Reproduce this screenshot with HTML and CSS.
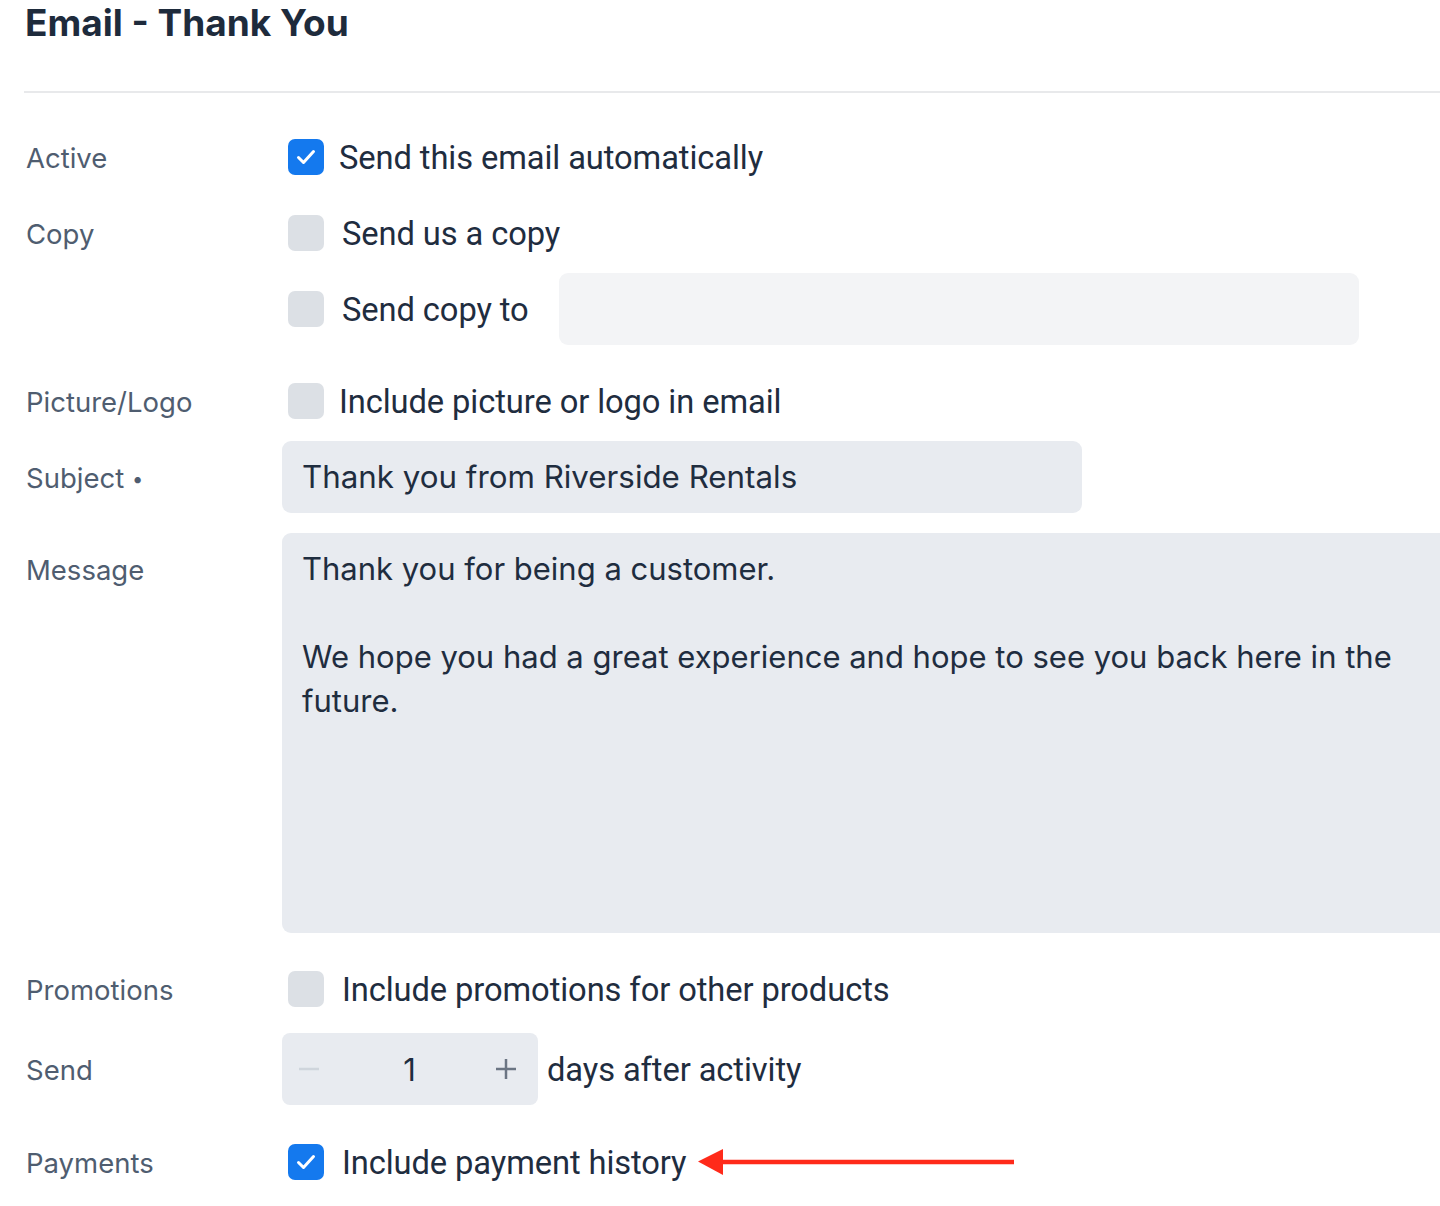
FILE: index.html
```html
<!DOCTYPE html>
<html lang="en">
<head>
<meta charset="utf-8">
<title>Email - Thank You</title>
<link rel="stylesheet" href="styles.css">
</head>
<body>
<div class="page">
  <h1 class="title">Email - Thank You</h1>
  <hr class="divider">
  <div class="form">
    <div class="row row-active">
      <div class="label">Active</div>
      <div class="control">
        <span class="check checked"><svg viewBox="0 0 36 36"><path d="M10.5 18.5l5 5 10-11" fill="none" stroke="#fff" stroke-width="3" stroke-linecap="round" stroke-linejoin="round"/></svg></span>
        <span class="opt">Send this email automatically</span>
      </div>
    </div>
    <div class="row row-copy">
      <div class="label">Copy</div>
      <div class="control">
        <span class="check"></span>
        <span class="opt opt-wide">Send us a copy</span>
      </div>
    </div>
    <div class="row row-copyto">
      <div class="label"></div>
      <div class="control">
        <span class="check"></span>
        <span class="opt opt-wide">Send copy to</span>
        <input class="field field-light" type="text" value="">
      </div>
    </div>
    <div class="row row-picture">
      <div class="label">Picture/Logo</div>
      <div class="control">
        <span class="check"></span>
        <span class="opt">Include picture or logo in email</span>
      </div>
    </div>
    <div class="row row-subject">
      <div class="label">Subject <span class="req">•</span></div>
      <div class="control">
        <input class="field" type="text" value="Thank you from Riverside Rentals">
      </div>
    </div>
    <div class="row row-message">
      <div class="label label-top">Message</div>
      <div class="control">
        <textarea class="area">Thank you for being a customer.

We hope you had a great experience and hope to see you back here in the future.</textarea>
      </div>
    </div>
    <div class="row row-promo">
      <div class="label">Promotions</div>
      <div class="control">
        <span class="check"></span>
        <span class="opt opt-wide">Include promotions for other products</span>
      </div>
    </div>
    <div class="row row-send">
      <div class="label">Send</div>
      <div class="control">
        <div class="stepper">
          <span class="step minus"><svg viewBox="0 0 24 24"><path d="M2 12h20" stroke="#cfd5dc" stroke-width="2.5"/></svg></span>
          <span class="step-value">1</span>
          <span class="step plus"><svg viewBox="0 0 24 24"><path d="M2 12h20M12 2v20" stroke="#6b7583" stroke-width="2.5"/></svg></span>
        </div>
        <span class="opt opt-after">days after activity</span>
      </div>
    </div>
    <div class="row row-payments">
      <div class="label">Payments</div>
      <div class="control">
        <span class="check checked"><svg viewBox="0 0 36 36"><path d="M10.5 18.5l5 5 10-11" fill="none" stroke="#fff" stroke-width="3" stroke-linecap="round" stroke-linejoin="round"/></svg></span>
        <span class="opt opt-wide">Include payment history</span>
        <svg class="arrow" viewBox="0 0 316 28"><path d="M22 14h294" stroke="#ff2a1a" stroke-width="4.5"/><path d="M0 13.5L25 1v26z" fill="#ff2a1a"/></svg>
      </div>
    </div>
  </div>
</div>
</body>
</html>
```
FILE: styles.css
```css
html, body {
  margin: 0;
  padding: 0;
  background: #ffffff;
  overflow: hidden;
}
.page {
  width: 1560px;
  padding-left: 24px;
  font-family: Inter, "Noto Sans", sans-serif;
  color: #1f2d3f;
}
.title {
  margin: 0;
  font-size: 37px;
  line-height: 46px;
  font-weight: 700;
  color: #1e2b3c;
  padding-left: 1px;
}
.divider {
  margin: 45px 0 0 0;
  border: 0;
  height: 2px;
  background: #e8e9eb;
}
.form {
  display: flex;
  flex-direction: column;
  padding-top: 28px;
}
.row {
  display: flex;
  align-items: center;
  min-height: 72px;
}
.row-copy, .row-copyto, .row-subject { margin-top: 4px; }
.row-picture, .row-message, .row-promo { margin-top: 20px; }
.row-send { margin-top: 8px; }
.row-payments { margin-top: 21px; }
.row-message { align-items: flex-start; }
.label {
  width: 256px;
  flex: none;
  padding-left: 2px;
  font-size: 27.5px;
  color: #4f5d70;
  padding-top: 2px;
}
.label-top { padding-top: 20px; }
.req { font-size: 20px; position: relative; top: -2px; }
.control {
  display: flex;
  align-items: center;
}
.check {
  width: 36px;
  height: 36px;
  border-radius: 7px;
  background: #dce0e5;
  margin-left: 6px;
  flex: none;
  display: block;
}
.check svg { display: block; width: 36px; height: 36px; }
.check.checked { background: #1479ee; }
.opt {
  font-family: Roboto, "Liberation Sans", sans-serif;
  font-size: 32.7px;
  color: #1f2d3f;
  margin-left: 15px;
  letter-spacing: -0.1px;
  padding-top: 2px;
}
.opt-wide { margin-left: 18px; }
.opt-after { margin-left: 9px; }
.field {
  width: 800px;
  height: 72px;
  box-sizing: border-box;
  border: 0;
  border-radius: 9px;
  background: #e8ebf0;
  padding: 0 20px;
  font-family: Inter, "Noto Sans", sans-serif;
  font-size: 31.3px;
  color: #1f2d3f;
  outline: none;
}
.field-light {
  background: #f3f4f6;
  margin-left: 30px;
}
.area {
  display: block;
  width: 1180px;
  height: 400px;
  box-sizing: border-box;
  border: 0;
  border-radius: 9px;
  background: #e8ebf0;
  padding: 14px 20px;
  font-family: Inter, "Noto Sans", sans-serif;
  font-size: 31px;
  line-height: 44px;
  color: #1f2d3f;
  resize: none;
  outline: none;
  overflow: hidden;
}
.stepper {
  width: 256px;
  height: 72px;
  border-radius: 8px;
  background: #e8ebf0;
  display: flex;
  align-items: center;
  justify-content: space-between;
  padding: 0 20px 0 15px;
  box-sizing: border-box;
}
.step svg { display: block; width: 24px; height: 24px; }
.step-value {
  font-family: Inter, "Noto Sans", sans-serif;
  font-size: 31px;
  color: #1f2d3f;
  padding-left: 4px;
}
.arrow {
  width: 316px;
  height: 28px;
  margin-left: 12px;
  display: block;
}
```
